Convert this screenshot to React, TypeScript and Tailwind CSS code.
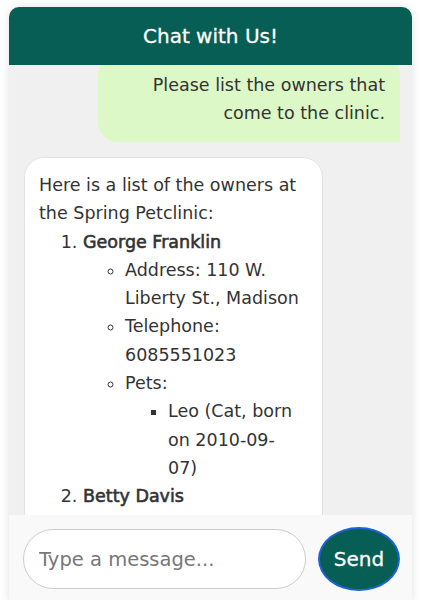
import { useEffect, useRef } from "react";

type Owner = {
  name: string;
  address: string;
  telephone: string;
  pets: string[];
};

const OWNERS: Owner[] = [
  {
    name: "George Franklin",
    address: "110 W. Liberty St., Madison",
    telephone: "6085551023",
    pets: ["Leo (Cat, born on 2010-09-07)"],
  },
  {
    name: "Betty Davis",
    address: "638 Cardinal Ave., Sun Prairie",
    telephone: "6085551749",
    pets: ["Basil (Hamster, born on 2012-08-06)"],
  },
];

function PetLine({ text }: { text: string }) {
  // keep the break after the last hyphen, like the original wrap
  const i = text.lastIndexOf("-");
  if (i < 0) return <>{text}</>;
  return (
    <>
      {text.slice(0, i + 1)}
      <br />
      {text.slice(i + 1)}
    </>
  );
}

export default function App() {
  const scrollRef = useRef<HTMLDivElement>(null);

  useEffect(() => {
    if (scrollRef.current) scrollRef.current.scrollTop = 24;
  }, []);

  return (
    <div className="min-h-screen bg-white font-['DejaVu_Sans',sans-serif] text-[#333]">
      <div className="ml-[9px] mt-[7px] w-[403px] overflow-hidden rounded-t-[10px] shadow-[0_0_10px_rgba(0,0,0,0.12)]">
        <header className="flex h-[58px] items-center justify-center bg-[#075e54] text-[20px] text-white [-webkit-text-stroke:0.3px_#fff]">
          Chat with Us!
        </header>

        <div
          ref={scrollRef}
          className="flex h-[450px] flex-col gap-[15px] overflow-hidden bg-[#f0f0f0] pb-[15px] pl-[15px] pr-[12px] pt-[15px] text-[17.5px] leading-[28px]"
        >
          <div className="max-w-[302px] self-end rounded-[20px] rounded-br-none bg-[#dcf8c6] px-[15px] py-[15px] text-right">
            Please list the owners that come to the clinic.
          </div>

          <div className="max-w-[299px] self-start rounded-[20px] rounded-bl-none border border-[#e2e2e2] bg-white px-[14px] pb-[14px] pt-[13px] leading-[28.3px]">
            <p>Here is a list of the owners at the Spring Petclinic:</p>
            <ol className="list-decimal pl-[44px]">
              {OWNERS.map((o) => (
                <li key={o.name}>
                  <strong className="font-normal [-webkit-text-stroke:0.6px_#333]">
                    {o.name}
                  </strong>
                  <ul className="list-[circle] pl-[42px]">
                    <li>Address: {o.address}</li>
                    <li>Telephone: {o.telephone}</li>
                    <li>
                      Pets:
                      <ul className="list-[square] pl-[43px]">
                        {o.pets.map((p) => (
                          <li key={p}>
                            <PetLine text={p} />
                          </li>
                        ))}
                      </ul>
                    </li>
                  </ul>
                </li>
              ))}
            </ol>
          </div>
        </div>

        <div className="flex items-center gap-[12px] bg-[#f9f9f9] py-[12px] pl-[14px] pr-[12px]">
          <input
            type="text"
            placeholder="Type a message..."
            className="h-[60px] min-w-0 flex-1 rounded-full border border-[#cccccc] bg-white px-[15px] text-[19.5px] text-[#333] outline-none placeholder:text-[#777]"
          />
          <button
            type="button"
            className="h-[64px] w-[82px] shrink-0 rounded-[50%] border-2 border-[#1e63d6] bg-[#075e54] text-[20px] text-white [-webkit-text-stroke:0.3px_#fff]"
          >
            Send
          </button>
        </div>
      </div>
    </div>
  );
}
